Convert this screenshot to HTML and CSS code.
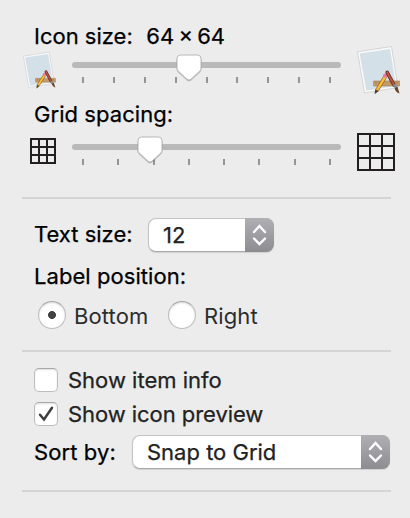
FILE: index.html
```html
<!DOCTYPE html>
<html lang="en">
<head>
<meta charset="utf-8">
<title>View Options</title>
<link rel="stylesheet" href="styles.css">
</head>
<body>
<svg class="defs" width="0" height="0" aria-hidden="true">
  <symbol id="preview" viewBox="0 0 44 50">
    <path d="M1.5 6.8 35.5 1.5 42 42.5 8.5 48Z" fill="#fafafa" stroke="#cdcdcd" stroke-width=".8"/>
    <path d="M3.7 8.6 34 3.9 40 40.8 10.3 45.7Z" fill="#d3e0e7"/>
    <path d="M17.5 36h26.2v5H17.5z" fill="#c49b68" stroke="#a58255" stroke-width=".6"/>
    <path d="M20 36.5v2M23 36.5v2M26 36.5v2M35 36.5v2M38 36.5v2M41 36.5v2" stroke="#8b6b45" stroke-width=".7"/>
    <path d="M29.4 31.5 20.8 45.5" stroke="#8b5721" stroke-width="3.6"/>
    <path d="M29.4 31.5 21 45.2" stroke="#fabd35" stroke-width="2.5"/>
    <path d="m19.2 44.3 3.2 2-3.8 3Z" fill="#4b3d30"/>
    <circle cx="29.2" cy="30.6" r="2.1" fill="#e878a2"/>
    <path d="M31.2 27.3 38 40" stroke="#582a24" stroke-width="3.6" stroke-linecap="round"/>
    <path d="M31.2 27.3 37.5 39" stroke="#bf5141" stroke-width="2.1" stroke-linecap="round"/>
    <path d="m36.8 40 2.7-1.5 2 3.6-2.6 1.6Z" fill="#7e9095"/>
    <path d="m38.6 43.2 2.9-1.5 2 6.8q-4-1.4-4.9-5.3Z" fill="#684329"/>
  </symbol>
  <symbol id="thumb" viewBox="0 0 28 30">
    <path d="M5.5 2h17q3.5 0 3.5 3.5V15q0 1.6-1 2.8L16 26.2q-2 1.7-4 0L3 17.8Q2 16.6 2 15V5.5Q2 2 5.5 2Z" fill="#fff" stroke="#b8b8b8" stroke-width="1"/>
  </symbol>
  <symbol id="chevrons" viewBox="0 0 29 34">
    <path d="m9 14 5.5-6 5.5 6M9 20.5l5.5 5.5 5.5-5.5" fill="none" stroke="#fff" stroke-width="2.4" stroke-linecap="round" stroke-linejoin="miter"/>
  </symbol>
</svg>
<main class="panel">
  <section class="group group-sliders">
    <div class="line"><span>Icon size:</span><span class="value">64 × 64</span></div>
    <div class="slider-row slider-size">
      <svg class="pic-small"><use href="#preview"/></svg>
      <div class="slider">
        <div class="track"></div>
        <div class="ticks"><i></i><i></i><i></i><i></i><i></i><i></i><i></i><i></i><i></i></div>
        <svg class="thumb thumb-size"><use href="#thumb"/></svg>
      </div>
      <svg class="pic-large"><use href="#preview"/></svg>
    </div>
    <div class="line"><span class="t-grid">Grid spacing:</span></div>
    <div class="slider-row slider-spacing">
      <svg class="grid-small" viewBox="0 0 26 26"><path d="M1 1h24v24H1zM9 1v24M17 1v24M1 9h24M1 17h24"/></svg>
      <div class="slider">
        <div class="track"></div>
        <div class="ticks"><i></i><i></i><i></i><i></i><i></i><i></i><i></i><i></i></div>
        <svg class="thumb thumb-spacing"><use href="#thumb"/></svg>
      </div>
      <svg class="grid-large" viewBox="0 0 38 38"><path d="M1 1h36v36H1zM13 1v36M25 1v36M1 13h36M1 25h36"/></svg>
    </div>
  </section>
  <section class="group group-text">
    <div class="field">
      <span class="label">Text size:</span>
      <div class="select select-size"><span>12</span><b class="stepper"><svg><use href="#chevrons"/></svg></b></div>
    </div>
    <div class="line line-label"><span class="t-label">Label position:</span></div>
    <div class="radios">
      <span class="radio checked"></span><span class="t-bottom">Bottom</span>
      <span class="radio"></span><span class="t-right">Right</span>
    </div>
  </section>
  <section class="group group-options">
    <div class="check-row"><span class="checkbox"></span><span class="t-info">Show item info</span></div>
    <div class="check-row"><span class="checkbox"><svg viewBox="0 0 24 24"><path d="m6 12.8 4 4.7 8-11.7"/></svg></span><span class="t-preview">Show icon preview</span></div>
    <div class="field field-sort">
      <span class="label t-sort">Sort by:</span>
      <div class="select select-sort"><span>Snap to Grid</span><b class="stepper"><svg><use href="#chevrons"/></svg></b></div>
    </div>
  </section>
</main>
</body>
</html>
```
FILE: styles.css
```css
* { box-sizing: border-box; }
body {
  margin: 0;
  background: #ececec;
  color: #000;
  font: 22px/28px Inter, sans-serif;
  -webkit-text-stroke: .25px currentColor;
  white-space: nowrap;
  overflow: hidden;
}
.defs { position: absolute; }
svg { display: block; flex: none; }
.panel { width: 410px; height: 518px; padding: 22px 19px 0 22px; }
.group { border-bottom: 2px solid #d5d5d5; }
.group-sliders { height: 177px; }
.group-text { height: 153px; padding-top: 19px; }
.group-options { height: 140px; padding-top: 16px; }
.line { display: flex; height: 28px; padding-left: 12px; }
.value { margin-left: auto; margin-right: 166px; word-spacing: -2px; }
.t-grid, .t-label { letter-spacing: .06px; }

.slider-row { display: flex; align-items: flex-start; }
.slider-size { height: 50px; }
.slider-spacing { height: 47px; }
.pic-small { width: 34px; height: 38px; margin-top: 1px; }
.slider { position: relative; flex: none; width: 269px; margin-left: 16px; padding-top: 12px; }
.track { height: 6px; border-radius: 3px; background: #b9b9b9; }
.ticks { display: flex; justify-content: space-between; padding: 9px 10px 0; }
.ticks i { width: 2px; height: 6px; background: #959595; }
.thumb { position: absolute; width: 28px; height: 30px; top: 3px; filter: drop-shadow(0 1px .6px rgba(0,0,0,.22)); }
.thumb-size { left: 103px; }
.thumb-spacing { left: 64px; }
.pic-large { width: 44px; height: 50px; margin: -5px 0 0 15px; }
.slider-spacing .slider { padding-top: 16px; }
.slider-spacing .thumb { top: 7px; }
.grid-small { width: 26px; height: 26px; margin: 10px 0 0 8px; }
.grid-large { width: 38px; height: 38px; margin: 5px 0 0 16px; }
.grid-small path, .grid-large path { fill: none; stroke: #231f20; stroke-width: 2; }

.field { display: flex; align-items: center; height: 34px; padding-left: 12px; }
.label { margin-bottom: 2px; }
.select {
  display: flex;
  height: 34px;
  margin-left: auto;
  padding: 2px 0 0 14px;
  border: 1px solid #c3c3c3;
  border-bottom-color: #a9a9a9;
  border-radius: 8px;
  background: #fff;
  box-shadow: 0 1px 1px rgba(0,0,0,.12);
  color: #222;
}
.select-size { width: 126px; margin-right: 117px; }
.select-sort { width: 258px; margin-right: 1px; }
.stepper {
  width: 29px;
  height: 34px;
  margin: -3px -1px 0 auto;
  border-radius: 0 8px 8px 0;
  background: linear-gradient(#b0afb4, #8d8c91);
}
.stepper svg { width: 29px; height: 34px; }
.line-label { margin-top: 10px; }
.radios { display: flex; align-items: center; margin-top: 10px; padding-left: 16px; color: #2c2c2c; -webkit-text-stroke-width: 0; }
.radio {
  width: 28px;
  height: 28px;
  border: 1px solid #bdbdbd;
  border-top-color: #a5a5a5;
  border-radius: 50%;
  background: #fff;
  box-shadow: inset 0 1px 2px rgba(0,0,0,.16);
}
.radio.checked { background: radial-gradient(circle, #424242 3.6px, #fff 4.3px); }
.t-bottom { width: 102px; padding-left: 8px; padding-top: 2px; letter-spacing: .1px; }
.t-right { padding-left: 8px; padding-top: 2px; letter-spacing: .1px; }
.check-row { display: flex; align-items: flex-start; height: 34px; padding-left: 12px; line-height: 24px; color: #222; }
.checkbox {
  width: 24px;
  height: 24px;
  margin-right: 10px;
  border: 1px solid #bdbdbd;
  border-top-color: #a8a8a8;
  border-radius: 5px;
  background: #fff;
  box-shadow: inset 0 1px 2px rgba(0,0,0,.13);
}
.checkbox svg { width: 24px; height: 24px; margin: -1px; }
.checkbox path { fill: none; stroke: #3d3d3d; stroke-width: 2.5; stroke-linecap: round; }
.t-preview { letter-spacing: -.06px; }
.field-sort { margin-top: -1px; }
.t-sort { margin-bottom: 0; letter-spacing: .1px; }
```
